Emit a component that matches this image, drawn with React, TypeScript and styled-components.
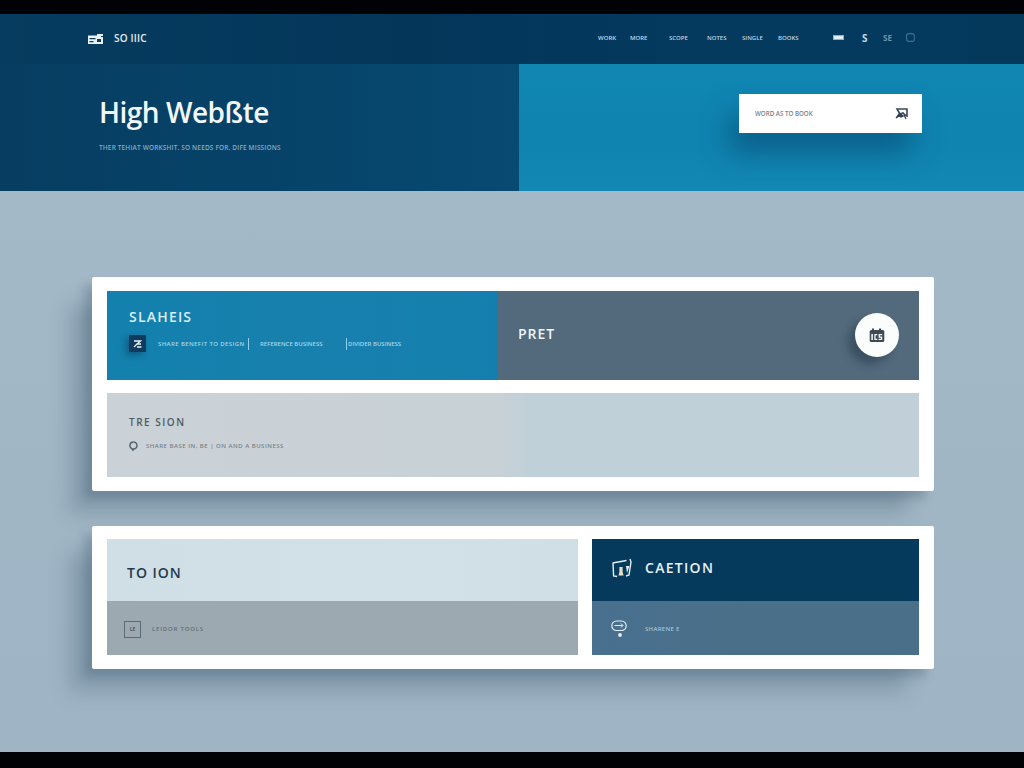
import React from 'react';
import styled, { createGlobalStyle } from 'styled-components';

const GlobalStyle = createGlobalStyle`
    html, body {
        margin: 0;
        padding: 0;
        background: #000;
        font-family: "Open Sans", "Liberation Sans", sans-serif;
    }
    * {
        box-sizing: border-box;
    }
`;

const Styled = {
    Page: styled.div`
        width: 1024px;
        height: 768px;
        overflow: hidden;
        display: flex;
        flex-direction: column;
        background: #000;
    `,
    Letterbox: styled.div<{ $height: number }>`
        flex: 0 0 ${p => p.$height}px;
        background: #010205;
    `,
    Header: styled.header`
        flex: 0 0 50px;
        display: flex;
        align-items: center;
        padding: 0 0 3px 87px;
        background: linear-gradient(90deg, #063c5f 0%, #04365a 40%, #033a5e 70%, #04395c 100%);
    `,
    Logo: styled.div`
        display: flex;
        align-items: center;
        gap: 10px;
        width: 511px;
        font-size: 10px;
        font-weight: 600;
        color: #e6eef3;
        letter-spacing: 0.2px;
    `,
    Nav: styled.nav`
        display: flex;
        align-items: center;
    `,
    NavLink: styled.span<{ $width: number }>`
        width: ${p => p.$width}px;
        font-size: 6px;
        font-weight: 600;
        color: #c2d6e2;
        white-space: nowrap;
    `,
    Tools: styled.div`
        display: flex;
        align-items: center;
        margin-left: 32px;
    `,
    ToolSlot: styled.span<{ $width: number; $color: string; $size?: number }>`
        display: flex;
        align-items: center;
        width: ${p => p.$width}px;
        font-size: ${p => p.$size ?? 10}px;
        font-weight: 700;
        color: ${p => p.$color};
    `,
    Hero: styled.section`
        flex: 0 0 127px;
        display: grid;
        grid-template-columns: 519px 505px;
    `,
    HeroLeft: styled.div`
        padding: 29px 0 0 99px;
        background: linear-gradient(90deg, #073d61 0%, #064369 55%, #074a72 100%);
    `,
    HeroTitle: styled.h1`
        margin: 0;
        font-size: 28px;
        line-height: 38px;
        font-weight: 600;
        letter-spacing: -0.5px;
        color: #f2f7fa;
        white-space: nowrap;
    `,
    HeroText: styled.p`
        margin: 12px 0 0;
        font-size: 6.5px;
        line-height: 9px;
        font-weight: 600;
        letter-spacing: 0.15px;
        color: #86abc2;
        white-space: nowrap;
    `,
    HeroRight: styled.div`
        padding: 30px 0 0 220px;
        background: linear-gradient(180deg, #1086b3 0%, #0f84b1 60%, #1388b5 100%);
    `,
    Search: styled.div`
        width: 183px;
        height: 39px;
        display: flex;
        align-items: center;
        justify-content: space-between;
        padding: 0 14px 0 16px;
        background: #fff;
        box-shadow: -10px 20px 28px rgba(6, 62, 100, 0.5);
    `,
    SearchText: styled.span`
        font-size: 6.2px;
        font-weight: 600;
        color: #77838c;
    `,
    Main: styled.main`
        flex: 1;
        display: flex;
        flex-direction: column;
        gap: 35px;
        padding: 86px 90px 0 92px;
        background: linear-gradient(180deg, #a3b9c8 0%, #a0b6c5 60%, #9fb5c5 100%);
    `,
    Card: styled.div<{ $height: number; $top: number }>`
        height: ${p => p.$height}px;
        padding: ${p => p.$top}px 15px 14px;
        background: #fff;
        border-radius: 2px;
        box-shadow:
            -8px 8px 10px rgba(64, 88, 108, 0.3),
            -25px 25px 18px -2px rgba(72, 98, 118, 0.3);
    `,
    Stack: styled.div`
        height: 100%;
        display: grid;
        grid-template-rows: 89px 84px;
        row-gap: 13px;
    `,
    SplitRow: styled.div`
        display: grid;
        grid-template-columns: 391px 421px;
    `,
    BluePanel: styled.div`
        padding: 17px 0 0 22px;
        background: linear-gradient(90deg, #1380ae 0%, #1880ad 50%, #147fae 100%);
    `,
    SlatePanel: styled.div`
        display: flex;
        align-items: center;
        justify-content: space-between;
        padding: 0 20px 1px 20px;
        background: #526a7c;
    `,
    GreyPanel: styled.div`
        padding: 20px 0 0 22px;
        background: linear-gradient(90deg, #cbd2d7 0%, #c8d1d6 48%, #c0d0d8 52%, #c1d0d8 100%);
    `,
    Heading: styled.h2<{ $color: string; $size?: number; $spacing?: number; $lift?: number }>`
        margin: 0 0 ${p => p.$lift ?? 0}px;
        font-size: ${p => p.$size ?? 14}px;
        line-height: 18px;
        font-weight: 600;
        letter-spacing: ${p => p.$spacing ?? 1}px;
        color: ${p => p.$color};
        white-space: nowrap;
    `,
    MetaRow: styled.div<{ $gap: number; $top: number }>`
        display: flex;
        align-items: center;
        gap: ${p => p.$gap}px;
        margin-top: ${p => p.$top}px;
    `,
    Small: styled.span<{ $color: string; $width?: number; $left?: number; $spacing?: number }>`
        ${p => (p.$width ? `width: ${p.$width}px;` : '')}
        margin-left: ${p => p.$left ?? 0}px;
        font-size: 6px;
        font-weight: 600;
        letter-spacing: ${p => p.$spacing ?? 0}px;
        color: ${p => p.$color};
        white-space: nowrap;
    `,
    Divider: styled.span`
        width: 1px;
        height: 12px;
        background: #8fd0ec;
    `,
    BadgeIcon: styled.span`
        width: 17px;
        height: 17px;
        display: flex;
        align-items: center;
        justify-content: center;
        background: #103a5e;
        box-shadow: -3px 3px 6px rgba(8, 50, 80, 0.45);
    `,
    RoundButton: styled.div`
        width: 44px;
        height: 44px;
        display: flex;
        align-items: center;
        justify-content: center;
        border-radius: 50%;
        background: #fbfcfc;
        box-shadow: -7px 7px 9px rgba(28, 48, 64, 0.45);
    `,
    Columns: styled.div`
        height: 100%;
        display: grid;
        grid-template-columns: 471px 327px;
        column-gap: 14px;
    `,
    Column: styled.div`
        display: grid;
        grid-template-rows: 62px 54px;
    `,
    Cell: styled.div<{ $bg: string; $pad: number; $gap: number; $top?: number; $bottom?: number }>`
        display: flex;
        align-items: center;
        gap: ${p => p.$gap}px;
        padding: ${p => p.$top ?? 0}px 0 ${p => p.$bottom ?? 0}px ${p => p.$pad}px;
        background: ${p => p.$bg};
    `,
    OutlineBox: styled.span`
        width: 17px;
        height: 17px;
        display: flex;
        align-items: center;
        justify-content: center;
        border: 1px solid #5d6b76;
        font-size: 5px;
        font-weight: 700;
        color: #4e5c67;
    `,
};

const LogoIcon: React.FC = () => (
    <svg width="17" height="14" viewBox="0 0 17 14">
        <path d="M1 4.5h9V3h6v2h-2v1h2v7H1z" fill="#eaf1f5" />
        <path d="M2.5 7h6v1.2h-6zM10 8h4v3h-4zM2.5 10h4v1.2h-4zM11 1h5v1h-5z" fill="#0a3d60" />
    </svg>
);

const SearchIcon: React.FC = () => (
    <svg width="13" height="12" viewBox="0 0 13 12">
        <path d="M2 1h10v7l-2-1-2-2-3 1z" fill="none" stroke="#39485a" strokeWidth="1.6" />
        <path d="M1 10l3-4 3 1 1 1-2 1-2-1zM9 7l2 4" fill="#2f3d4e" stroke="#2f3d4e" strokeWidth="1.2" />
    </svg>
);

const CalendarIcon: React.FC = () => (
    <svg width="16" height="15" viewBox="0 0 16 15">
        <rect x="0.7" y="2" width="14.6" height="12" rx="1.5" fill="#3e4a55" />
        <path d="M3 0.5h2v2H3zM10 0.5h2v2h-2z" fill="#3e4a55" />
        <path d="M2.3 6h1.6v6H2.3zM5.3 6h3v1.3H6.6v3.4h1.7V12h-3zM9.6 6h3.6v1.3h-2.3v1.2h2.3V12H9.6v-1.3h2.3V9.7H9.6z" fill="#f3f5f6" />
    </svg>
);

const SlashIcon: React.FC = () => (
    <svg width="9" height="8" viewBox="0 0 9 8">
        <path d="M1 1h6.5L4 4h4M1 7l3-3M4 7h4.5" fill="none" stroke="#e8f0f5" strokeWidth="1.3" />
    </svg>
);

const BubbleIcon: React.FC = () => (
    <svg width="9" height="10" viewBox="0 0 9 10">
        <path d="M4.5 1a3.5 3.5 0 1 1-.01 7l-.6 1.3L3 7.7A3.5 3.5 0 0 1 4.5 1z" fill="none" stroke="#566571" strokeWidth="1.5" />
    </svg>
);

const FrameIcon: React.FC = () => (
    <svg width="22" height="20" viewBox="0 0 22 20">
        <path d="M1.5 5l14-2.5M2 5l.6 13 3.5.5M19 1l1 3-2 13-3 1" fill="none" stroke="#e6eff4" strokeWidth="1.4" />
        <path d="M8.4 9h3.2v5l1 3.5H7.4l1-3.5z" fill="#e9dcc4" />
        <path d="M15 8h3.5l-2.5 7z" fill="#e6eff4" />
    </svg>
);

const CloudIcon: React.FC = () => (
    <svg width="16" height="18" viewBox="0 0 16 18">
        <rect x="0.8" y="1" width="14.4" height="9.5" rx="4.7" fill="none" stroke="#e4eef4" strokeWidth="1.2" />
        <path d="M3.5 5.5h8M10 3.5l2 2-2 2" fill="none" stroke="#e4eef4" strokeWidth="1" />
        <circle cx="9" cy="15" r="1.9" fill="#e4eef4" />
    </svg>
);

const App: React.FC = () => {
    return (
        <Styled.Page>
            <GlobalStyle />
            <Styled.Letterbox $height={14} />
            <Styled.Header>
                <Styled.Logo>
                    <LogoIcon />
                    <span>SO IIIC</span>
                </Styled.Logo>
                <Styled.Nav>
                    <Styled.NavLink $width={32}>WORK</Styled.NavLink>
                    <Styled.NavLink $width={39}>MORE</Styled.NavLink>
                    <Styled.NavLink $width={38}>SCOPE</Styled.NavLink>
                    <Styled.NavLink $width={35}>NOTES</Styled.NavLink>
                    <Styled.NavLink $width={36}>SINGLE</Styled.NavLink>
                    <Styled.NavLink $width={23}>BOOKS</Styled.NavLink>
                </Styled.Nav>
                <Styled.Tools>
                    <Styled.ToolSlot $width={29} $color="#e6eef3">
                        <svg width="11" height="5" viewBox="0 0 11 5">
                            <rect width="11" height="5" fill="#8fb0c4" />
                            <rect x="1" y="1.2" width="9" height="2.6" fill="#eef4f7" />
                        </svg>
                    </Styled.ToolSlot>
                    <Styled.ToolSlot $width={21} $color="#c4d9e6">S</Styled.ToolSlot>
                    <Styled.ToolSlot $width={23} $color="#6f94ab" $size={8}>SE</Styled.ToolSlot>
                    <Styled.ToolSlot $width={10} $color="#3f7090">
                        <svg width="9" height="9" viewBox="0 0 9 9">
                            <rect x="0.6" y="0.6" width="7.8" height="7.8" rx="2.4" fill="none" stroke="#3f7090" strokeWidth="1.1" />
                        </svg>
                    </Styled.ToolSlot>
                </Styled.Tools>
            </Styled.Header>
            <Styled.Hero>
                <Styled.HeroLeft>
                    <Styled.HeroTitle>High Webßte</Styled.HeroTitle>
                    <Styled.HeroText>THER TEHIAT WORKSHIT. SO NEEDS FOR. DIFE MISSIONS</Styled.HeroText>
                </Styled.HeroLeft>
                <Styled.HeroRight>
                    <Styled.Search>
                        <Styled.SearchText>WORD AS TO BOOK</Styled.SearchText>
                        <SearchIcon />
                    </Styled.Search>
                </Styled.HeroRight>
            </Styled.Hero>
            <Styled.Main>
                <Styled.Card $height={214} $top={14}>
                    <Styled.Stack>
                        <Styled.SplitRow>
                            <Styled.BluePanel>
                                <Styled.Heading $color="#d9eef6" $spacing={1.2}>SLAHEIS</Styled.Heading>
                                <Styled.MetaRow $gap={0} $top={9}>
                                    <Styled.BadgeIcon><SlashIcon /></Styled.BadgeIcon>
                                    <Styled.Small $color="#a6d6ea" $left={12} $width={90} $spacing={0.4}>SHARE BENEFIT TO DESIGN</Styled.Small>
                                    <Styled.Divider />
                                    <Styled.Small $color="#a6d6ea" $left={11} $width={86}>REFERENCE BUSINESS</Styled.Small>
                                    <Styled.Divider />
                                    <Styled.Small $color="#a6d6ea" $left={1}>DIVIDER BUSINESS</Styled.Small>
                                </Styled.MetaRow>
                            </Styled.BluePanel>
                            <Styled.SlatePanel>
                                <Styled.Heading $color="#eef4f7" $lift={3}>PRET</Styled.Heading>
                                <Styled.RoundButton><CalendarIcon /></Styled.RoundButton>
                            </Styled.SlatePanel>
                        </Styled.SplitRow>
                        <Styled.GreyPanel>
                            <Styled.Heading $color="#4e5a63" $size={10} $spacing={1.5}>TRE SION</Styled.Heading>
                            <Styled.MetaRow $gap={8} $top={10}>
                                <BubbleIcon />
                                <Styled.Small $color="#76838c" $spacing={0.5}>SHARE BASE IN, BE | ON AND A BUSINESS</Styled.Small>
                            </Styled.MetaRow>
                        </Styled.GreyPanel>
                    </Styled.Stack>
                </Styled.Card>
                <Styled.Card $height={143} $top={13}>
                    <Styled.Columns>
                        <Styled.Column>
                            <Styled.Cell $bg="linear-gradient(90deg, #d0dee5, #d2e1e8 60%, #d0dfe6)" $pad={20} $gap={11} $top={5}>
                                <Styled.Heading $color="#1e3a50">TO ION</Styled.Heading>
                            </Styled.Cell>
                            <Styled.Cell $bg="#9da9b0" $pad={17} $gap={11} $top={2}>
                                <Styled.OutlineBox>LE</Styled.OutlineBox>
                                <Styled.Small $color="#5f6e79" $spacing={0.8}>LEIDOR TOOLS</Styled.Small>
                            </Styled.Cell>
                        </Styled.Column>
                        <Styled.Column>
                            <Styled.Cell $bg="#053a5c" $pad={19} $gap={12} $bottom={5}>
                                <FrameIcon />
                                <Styled.Heading $color="#e9f1f5" $spacing={1.3}>CAETION</Styled.Heading>
                            </Styled.Cell>
                            <Styled.Cell $bg="linear-gradient(90deg, #48708f, #4a6f88 50%, #4a7089)" $pad={19} $gap={18} $top={2}>
                                <CloudIcon />
                                <Styled.Small $color="#a8c2d2" $spacing={0.3}>SHARENE E</Styled.Small>
                            </Styled.Cell>
                        </Styled.Column>
                    </Styled.Columns>
                </Styled.Card>
            </Styled.Main>
            <Styled.Letterbox $height={16} />
        </Styled.Page>
    );
};

export default App;
